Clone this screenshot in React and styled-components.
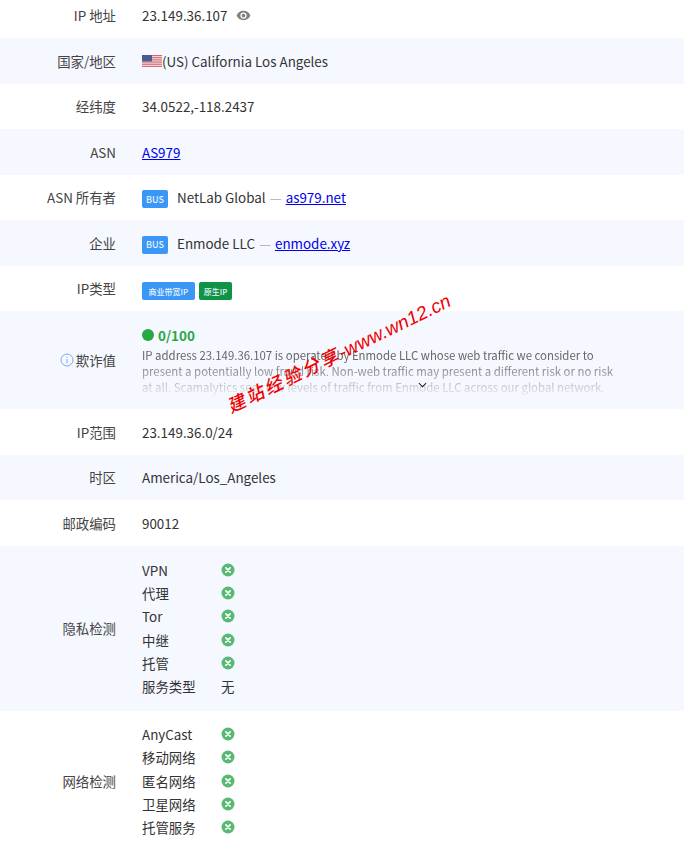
import React from "react";
import styled, { createGlobalStyle } from "styled-components";

const GlobalStyle = createGlobalStyle`
  html, body {
    margin: 0;
    padding: 0;
    background: #fff;
    overflow: hidden;
  }
  body {
    font-family: "Noto Sans CJK SC", "Noto Sans", sans-serif;
    font-size: 13.4px;
    color: #333;
  }
`;

const EyeIcon = () => (
  <EyeSvg viewBox="0 0 24 24">
    <path
      fill="currentColor"
      d="M12 4.5C7 4.5 2.7 7.6 1 12c1.7 4.4 6 7.5 11 7.5s9.3-3.1 11-7.5c-1.7-4.4-6-7.5-11-7.5zM12 17a5 5 0 1 1 0-10 5 5 0 0 1 0 10zm0-8a3 3 0 1 0 0 6 3 3 0 0 0 0-6z"
    />
  </EyeSvg>
);

const stripes = [0, 1, 2, 3, 4, 5, 6];

const UsFlag = () => (
  <FlagSvg viewBox="0 0 20 12">
    <rect width="20" height="12" fill="#f3eaea" />
    {stripes.map((i) => (
      <rect key={i} y={i * 1.85} width="20" height="0.95" fill="#d0616d" />
    ))}
    <rect width="10" height="6.5" fill="#4d5c8f" />
  </FlagSvg>
);

const InfoIcon = () => (
  <InfoSvg viewBox="0 0 14 14">
    <circle cx="7" cy="7" r="6" fill="none" stroke="#7fa8f2" strokeWidth="1" />
    <rect x="6.5" y="6" width="1" height="4.2" fill="#7fa8f2" />
    <rect x="6.5" y="3.8" width="1" height="1.1" fill="#7fa8f2" />
  </InfoSvg>
);

const CrossBadge = () => (
  <CrossSvg viewBox="0 0 14 14">
    <circle cx="7" cy="7" r="6.5" fill="#58b973" />
    <path d="M4.9 4.9l4.2 4.2M9.1 4.9l-4.2 4.2" stroke="#fff" strokeWidth="1.7" strokeLinecap="round" />
  </CrossSvg>
);

const Chevron = () => (
  <ChevronSvg viewBox="0 0 10 6">
    <path d="M1 1l4 4 4-4" fill="none" stroke="#222" strokeWidth="1.2" />
  </ChevronSvg>
);

const privacyChecks = ["VPN", "代理", "Tor", "中继", "托管"];
const networkChecks = ["AnyCast", "移动网络", "匿名网络", "卫星网络", "托管服务"];

const CheckList = ({ items, children }) => (
  <Checks>
    {items.map((item) => (
      <CheckRow key={item}>
        <CheckName>{item}</CheckName>
        <CrossBadge />
      </CheckRow>
    ))}
    {children}
  </Checks>
);

const App = () => {
  return (
    <Page>
      <GlobalStyle />
      <Row $height="38px" $first>
        <Label>IP 地址</Label>
        <Value>
          23.149.36.107
          <EyeIcon />
        </Value>
      </Row>
      <Row $striped>
        <Label>国家/地区</Label>
        <Value>
          <UsFlag />
          (US) California Los Angeles
        </Value>
      </Row>
      <Row>
        <Label>经纬度</Label>
        <Value>34.0522,-118.2437</Value>
      </Row>
      <Row $striped>
        <Label>ASN</Label>
        <Value>
          <Link href="#">AS979</Link>
        </Value>
      </Row>
      <Row>
        <Label>ASN 所有者</Label>
        <Value>
          <BusTag>BUS</BusTag>
          NetLab Global
          <Dash>—</Dash>
          <Link href="#">as979.net</Link>
        </Value>
      </Row>
      <Row $striped>
        <Label>企业</Label>
        <Value>
          <BusTag>BUS</BusTag>
          Enmode LLC
          <Dash>—</Dash>
          <Link href="#">enmode.xyz</Link>
        </Value>
      </Row>
      <Row>
        <Label>IP类型</Label>
        <Value>
          <TypeTag $color="#3b97f6" $pad="6.5px">商业带宽IP</TypeTag>
          <TypeTag $color="#0e9347" $pad="5px">原生IP</TypeTag>
        </Value>
      </Row>
      <Row $striped $height="98px">
        <Label>
          <InfoIcon />
          欺诈值
        </Label>
        <FraudCell>
          <Score>
            <ScoreDot />
            0/100
          </Score>
          <FraudText>
            IP address 23.149.36.107 is operated by Enmode LLC whose web traffic we consider to present a
            potentially low fraud risk. Non-web traffic may present a different risk or no risk at all.
            Scamalytics sees low levels of traffic from Enmode LLC across our global network.
          </FraudText>
          <Chevron />
        </FraudCell>
      </Row>
      <Row>
        <Label>IP范围</Label>
        <Value>23.149.36.0/24</Value>
      </Row>
      <Row $striped>
        <Label>时区</Label>
        <Value>America/Los_Angeles</Value>
      </Row>
      <Row>
        <Label>邮政编码</Label>
        <Value>90012</Value>
      </Row>
      <Row $striped $height="165px">
        <Label>隐私检测</Label>
        <CheckList items={privacyChecks}>
          <CheckRow>
            <CheckName>服务类型</CheckName>
            无
          </CheckRow>
        </CheckList>
      </Row>
      <Row $height="140px">
        <Label>网络检测</Label>
        <CheckList items={networkChecks} />
      </Row>
      <Watermark>
        <WatermarkCjk>建站经验分享</WatermarkCjk>-www.wn12.cn
      </Watermark>
    </Page>
  );
};

export default App;

const Page = styled.div`
  position: relative;
  width: 684px;
  height: 841px;
  overflow: hidden;
`;

const Row = styled.div`
  display: flex;
  align-items: center;
  box-sizing: border-box;
  height: ${(p) => p.$height || "45.5px"};
  padding-bottom: ${(p) => (p.$first ? "8px" : "0")};
  background: ${(p) => (p.$striped ? "#f5f8ff" : "#fff")};
`;

const Label = styled.div`
  display: flex;
  justify-content: flex-end;
  align-items: center;
  gap: 2px;
  flex: none;
  width: 116px;
  margin-right: 26px;
  color: #444;
`;

const Value = styled.div`
  display: flex;
  align-items: center;
  color: #333;
`;

const EyeSvg = styled.svg`
  width: 15px;
  height: 15px;
  margin: 1px 0 0 8px;
  color: #808080;
`;

const FlagSvg = styled.svg`
  display: block;
  width: 20px;
  height: 12px;
`;

const InfoSvg = styled.svg`
  width: 14px;
  height: 14px;
`;

const CrossSvg = styled.svg`
  display: block;
  width: 14px;
  height: 14px;
`;

const ChevronSvg = styled.svg`
  position: absolute;
  left: 276px;
  top: 56px;
  width: 9px;
  height: 6px;
`;

const Link = styled.a`
  color: #0000ee;
  text-decoration: underline;
`;

const BusTag = styled.span`
  display: inline-flex;
  align-items: center;
  justify-content: center;
  width: 26px;
  height: 18px;
  margin: 4px 9px 0 0;
  border-radius: 2px;
  background: #3b97f6;
  color: #e8f3ff;
  font-size: 9px;
  font-weight: 500;
`;

const TypeTag = styled.span`
  display: inline-flex;
  align-items: center;
  height: 18px;
  padding: 0 ${(p) => p.$pad};
  margin: 6px 4px 0 0;
  border-radius: 2px;
  background: ${(p) => p.$color};
  color: #e8f3ff;
  font-size: 8px;
  font-weight: 500;
  white-space: nowrap;
`;

const Dash = styled.span`
  margin: 0 4px;
  color: #aaa;
`;

const FraudCell = styled.div`
  position: relative;
  width: 480px;
`;

const Score = styled.div`
  display: flex;
  align-items: center;
  gap: 4px;
  margin-bottom: 3px;
  color: #28a745;
  font-weight: 700;
  line-height: 18px;
`;

const ScoreDot = styled.span`
  width: 12px;
  height: 12px;
  border-radius: 50%;
  background: #28a745;
`;

const FraudText = styled.div`
  height: 48px;
  color: #666;
  font-size: 11.4px;
  line-height: 16px;
  -webkit-mask-image: linear-gradient(to bottom, #000 25%, rgba(0, 0, 0, 0.1) 100%);
  mask-image: linear-gradient(to bottom, #000 25%, rgba(0, 0, 0, 0.1) 100%);
`;

const Checks = styled.div`
  display: flex;
  flex-direction: column;
  gap: 2.3px;
`;

const CheckRow = styled.div`
  display: flex;
  align-items: center;
  height: 21px;
  color: #333;
`;

const CheckName = styled.span`
  width: 79px;
`;

const Watermark = styled.div`
  position: absolute;
  left: 216px;
  top: 342px;
  color: #f00000;
  font-family: "Liberation Sans", "Noto Sans CJK SC", sans-serif;
  font-size: 19px;
  font-style: italic;
  font-weight: 500;
  line-height: 24px;
  white-space: nowrap;
  transform: rotate(-26deg);
`;

const WatermarkCjk = styled.span`
  font-size: 18px;
  letter-spacing: 2.6px;
`;
